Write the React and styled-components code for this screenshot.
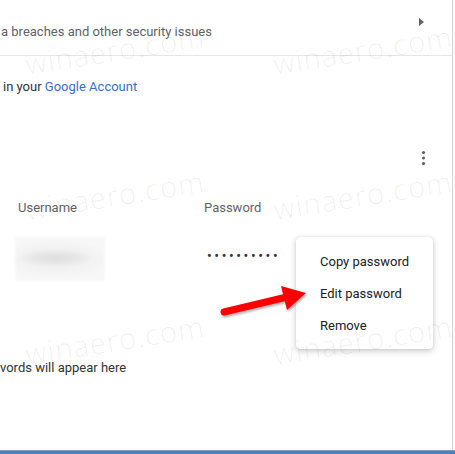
import styled, { createGlobalStyle } from "styled-components";

const GlobalStyle = createGlobalStyle`
  html, body {
    margin: 0;
    padding: 0;
    background: #fff;
    overflow: hidden;
  }
  body {
    font-family: Roboto, "Liberation Sans", Arial, sans-serif;
    font-size: 13px;
    -webkit-font-smoothing: antialiased;
  }
`

const Page = styled.div`
  position: relative;
  width: 455px;
  height: 454px;
  display: flex;
  flex-direction: column;
`

const Main = styled.div`
  flex: 1;
  display: flex;
  min-height: 0;
`

const Card = styled.section`
  position: relative;
  width: 452px;
  border-right: 1px solid #d5d5d5;
  overflow: hidden;
  display: flex;
  flex-direction: column;
`

const Gutter = styled.div`
  flex: 1;
  background: #fafafa;
`

const BottomBar = styled.div`
  height: 3px;
  background: #4f7fbc;
  border-top: 1px solid #7a9cc8;
`

const SecurityRow = styled.div`
  height: 55px;
  border-bottom: 1px solid #e6e6e6;
  display: flex;
  justify-content: space-between;
  align-items: flex-start;
`

const SubText = styled.p`
  margin: 24px 0 0 1px;
  line-height: 16px;
  color: #5f6368;
  white-space: nowrap;
`

const ArrowIcon = styled.svg`
  margin: 17px 26px 0 0;
  width: 8px;
  height: 10px;
  fill: #5f6368;
`

const AccountText = styled.p`
  margin: 23px 0 0 3px;
  line-height: 16px;
  color: #333;
  white-space: nowrap;
`

const Link = styled.a`
  color: #3b6fc8;
  text-decoration: none;
`

const ActionRow = styled.div`
  display: flex;
  justify-content: flex-end;
  padding: 55px 26px 0 0;
`

const Kebab = styled.svg`
  width: 5px;
  height: 16px;
  fill: #5f6368;
`

const ColumnGrid = styled.div`
  display: grid;
  grid-template-columns: 186px 1fr;
  padding-left: 18px;
  align-items: center;
`

const HeaderCell = styled.div`
  margin-top: 34px;
  line-height: 16px;
  color: #5f6368;
`

const EntryCell = styled.div`
  height: 44px;
  margin-top: 21px;
  display: flex;
  align-items: ${p => (p.$top ? "flex-start" : "center")};
`

const BlurredName = styled.div`
  width: 90px;
  height: 44px;
  margin-left: -3px;
  background: radial-gradient(ellipse 38px 9px at 40px 21px, #dedede 0%, #e6e6e6 55%, rgba(240,240,240,0) 100%),
    radial-gradient(ellipse 55px 20px at 42px 22px, #ededed 0%, #f3f3f3 70%, #f7f7f7 100%);
  filter: blur(1.5px);
`

const Dots = styled.span`
  margin: 11px 0 0 3px;
  font-size: 14px;
  letter-spacing: 2.6px;
  color: #333;
  line-height: 16px;
`

const FooterText = styled.p`
  margin: 79px 0 0 0;
  line-height: 16px;
  color: #333;
  white-space: nowrap;
`

const Menu = styled.ul`
  position: absolute;
  left: 296px;
  top: 237px;
  width: 137px;
  margin: 0;
  padding: 8px 0;
  list-style: none;
  background: #fff;
  border-radius: 4px;
  box-shadow: 0 2px 6px rgba(0, 0, 0, 0.22), 0 0 1px rgba(0, 0, 0, 0.2);
  z-index: 2;
`

const MenuItem = styled.li`
  height: 32px;
  display: flex;
  align-items: center;
  padding-left: 24px;
  color: #202124;
`

const Pointer = styled.svg`
  position: absolute;
  left: 215px;
  top: 280px;
  width: 95px;
  height: 40px;
  z-index: 3;
  filter: drop-shadow(1px 2px 1px rgba(0, 0, 0, 0.3));
`

const Watermarks = styled.div`
  position: absolute;
  left: 0;
  top: 0;
  width: 452px;
  height: 451px;
  overflow: hidden;
  pointer-events: none;
  z-index: 4;
  display: grid;
  grid-template-columns: 248px 176px;
  grid-template-rows: repeat(3, 145px);
  padding: 49px 0 0 28px;
  box-sizing: border-box;
`

const Watermark = styled.span`
  justify-self: start;
  font-family: "Open Sans", "DejaVu Sans", sans-serif;
  font-weight: 300;
  font-size: 29px;
  line-height: 30px;
  height: 30px;
  letter-spacing: 1.2px;
  color: rgba(0, 0, 0, 0.065);
  transform: rotate(-9deg);
  transform-origin: left bottom;
  white-space: nowrap;
`

function App() {
  return (
    <Page>
      <GlobalStyle />
      <Main>
        <Card>
          <SecurityRow>
            <SubText>a breaches and other security issues</SubText>
            <ArrowIcon viewBox="0 0 8 10">
              <path d="M1 1 L6 5 L1 9 Z" />
            </ArrowIcon>
          </SecurityRow>
          <AccountText>
            in your <Link href="#">Google Account</Link>
          </AccountText>
          <ActionRow>
            <Kebab viewBox="0 0 5 16">
              <circle cx="2.5" cy="2.5" r="1.6" />
              <circle cx="2.5" cy="8" r="1.6" />
              <circle cx="2.5" cy="13.5" r="1.6" />
            </Kebab>
          </ActionRow>
          <ColumnGrid>
            <HeaderCell>Username</HeaderCell>
            <HeaderCell>Password</HeaderCell>
            <EntryCell>
              <BlurredName />
            </EntryCell>
            <EntryCell $top>
              <Dots>••••••••••</Dots>
            </EntryCell>
          </ColumnGrid>
          <FooterText>vords will appear here</FooterText>

          <Menu>
            <MenuItem>Copy password</MenuItem>
            <MenuItem>Edit password</MenuItem>
            <MenuItem>Remove</MenuItem>
          </Menu>

          <Pointer viewBox="0 0 95 40">
            <line x1="9" y1="32" x2="72" y2="17" stroke="#f00" strokeWidth="7" strokeLinecap="round" />
            <polygon points="66,6 91,13 72,30" fill="#f00" />
          </Pointer>
        </Card>
        <Gutter />
      </Main>
      <BottomBar />

      <Watermarks>
        {Array.from({ length: 6 }).map((_, i) => (
          <Watermark key={i}>winaero.com</Watermark>
        ))}
      </Watermarks>
    </Page>
  );
}

export default App;
